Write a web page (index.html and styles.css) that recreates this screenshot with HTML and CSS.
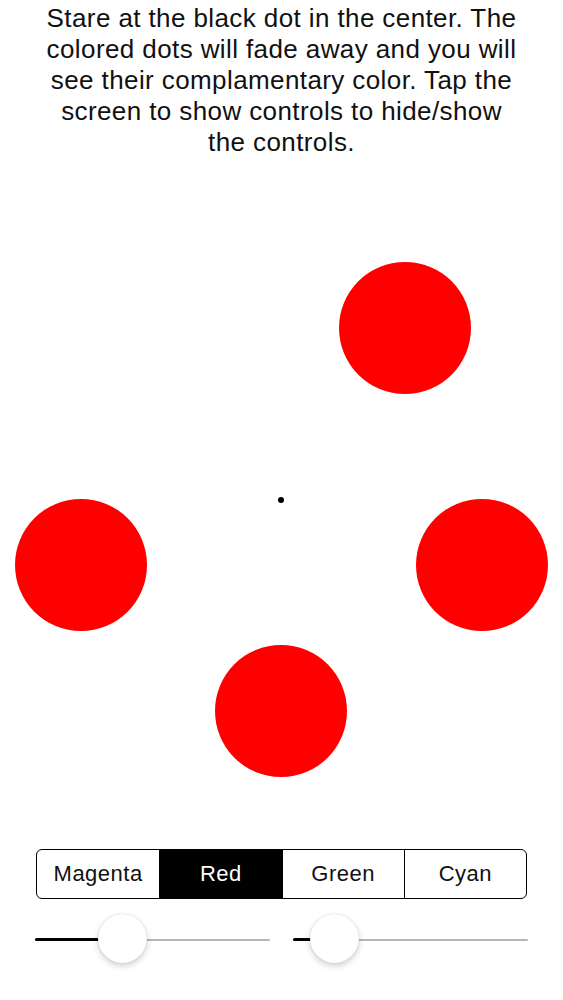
FILE: index.html
```html
<!DOCTYPE html>
<html>
<head>
<meta charset="utf-8">
<link rel="stylesheet" href="styles.css">
</head>
<body>
<div class="page">
  <p class="intro">Stare at the black dot in the center. The<br>colored dots will fade away and you will<br>see their complamentary color. Tap the<br>screen to show controls to hide/show<br>the controls.</p>
  <div class="canvas">
    <div class="spot spot-tr"></div>
    <div class="spot spot-l"></div>
    <div class="spot spot-r"></div>
    <div class="spot spot-b"></div>
    <div class="center-dot"></div>
  </div>
  <div class="controls">
    <div class="segmented">
      <div class="seg">Magenta</div>
      <div class="seg active">Red</div>
      <div class="seg">Green</div>
      <div class="seg">Cyan</div>
    </div>
    <div class="sliders">
      <div class="slider">
        <div class="track"><div class="fill" style="width:87px"></div></div>
        <div class="thumb" style="left:63px"></div>
      </div>
      <div class="slider">
        <div class="track"><div class="fill" style="width:41px"></div></div>
        <div class="thumb" style="left:17px"></div>
      </div>
    </div>
  </div>
</div>
</body>
</html>
```
FILE: styles.css
```css
html, body {
  margin: 0;
  padding: 0;
  background: #fff;
}
.page {
  width: 563px;
  font-family: "Liberation Sans", Arial, sans-serif;
  color: #111;
}
.intro {
  margin: 0;
  padding: 3px 0 0 0;
  font-size: 26px;
  letter-spacing: 0.4px;
  line-height: 31px;
  text-align: center;
  white-space: nowrap;
}
.canvas {
  position: relative;
  height: 691px;
}
.spot {
  position: absolute;
  width: 132px;
  height: 132px;
  border-radius: 50%;
  background: #ff0000;
}
.spot-tr { left: 339px; top: 104px; }
.spot-l { left: 15px; top: 341px; }
.spot-r { left: 416px; top: 341px; }
.spot-b { left: 215px; top: 487px; }
.center-dot {
  position: absolute;
  left: 278px;
  top: 339px;
  width: 6px;
  height: 6px;
  border-radius: 50%;
  background: #000;
}
.controls {
  display: flex;
  flex-direction: column;
  padding-bottom: 30px;
}
.segmented {
  margin: 0 36px;
  height: 50px;
  box-sizing: border-box;
  border: 1.5px solid #000;
  border-radius: 6px;
  overflow: hidden;
  display: grid;
  grid-template-columns: 1fr 1fr 1fr 1fr;
}
.seg {
  display: flex;
  align-items: center;
  justify-content: center;
  font-size: 22px;
  letter-spacing: 0.5px;
  color: #111;
  border-left: 1.5px solid #000;
}
.seg:first-child {
  border-left: none;
}
.seg.active {
  background: #000;
  color: #fff;
}
.sliders {
  margin: 15px 35px 0 35px;
  display: grid;
  grid-template-columns: 1fr 1fr;
  column-gap: 23px;
}
.slider {
  position: relative;
  height: 49px;
  display: flex;
  align-items: center;
}
.track {
  width: 100%;
  height: 2px;
  margin-top: 2px;
  background: #b6b6b6;
  border-radius: 1px;
  position: relative;
}
.fill {
  position: absolute;
  left: 0;
  top: -0.5px;
  height: 3px;
  background: #000;
  border-radius: 1.5px;
}
.thumb {
  position: absolute;
  top: 0;
  width: 49px;
  height: 49px;
  border-radius: 50%;
  background: #fff;
  box-shadow: 0 0 1px rgba(0,0,0,0.25), 0 3px 6px rgba(0,0,0,0.18);
}
```
